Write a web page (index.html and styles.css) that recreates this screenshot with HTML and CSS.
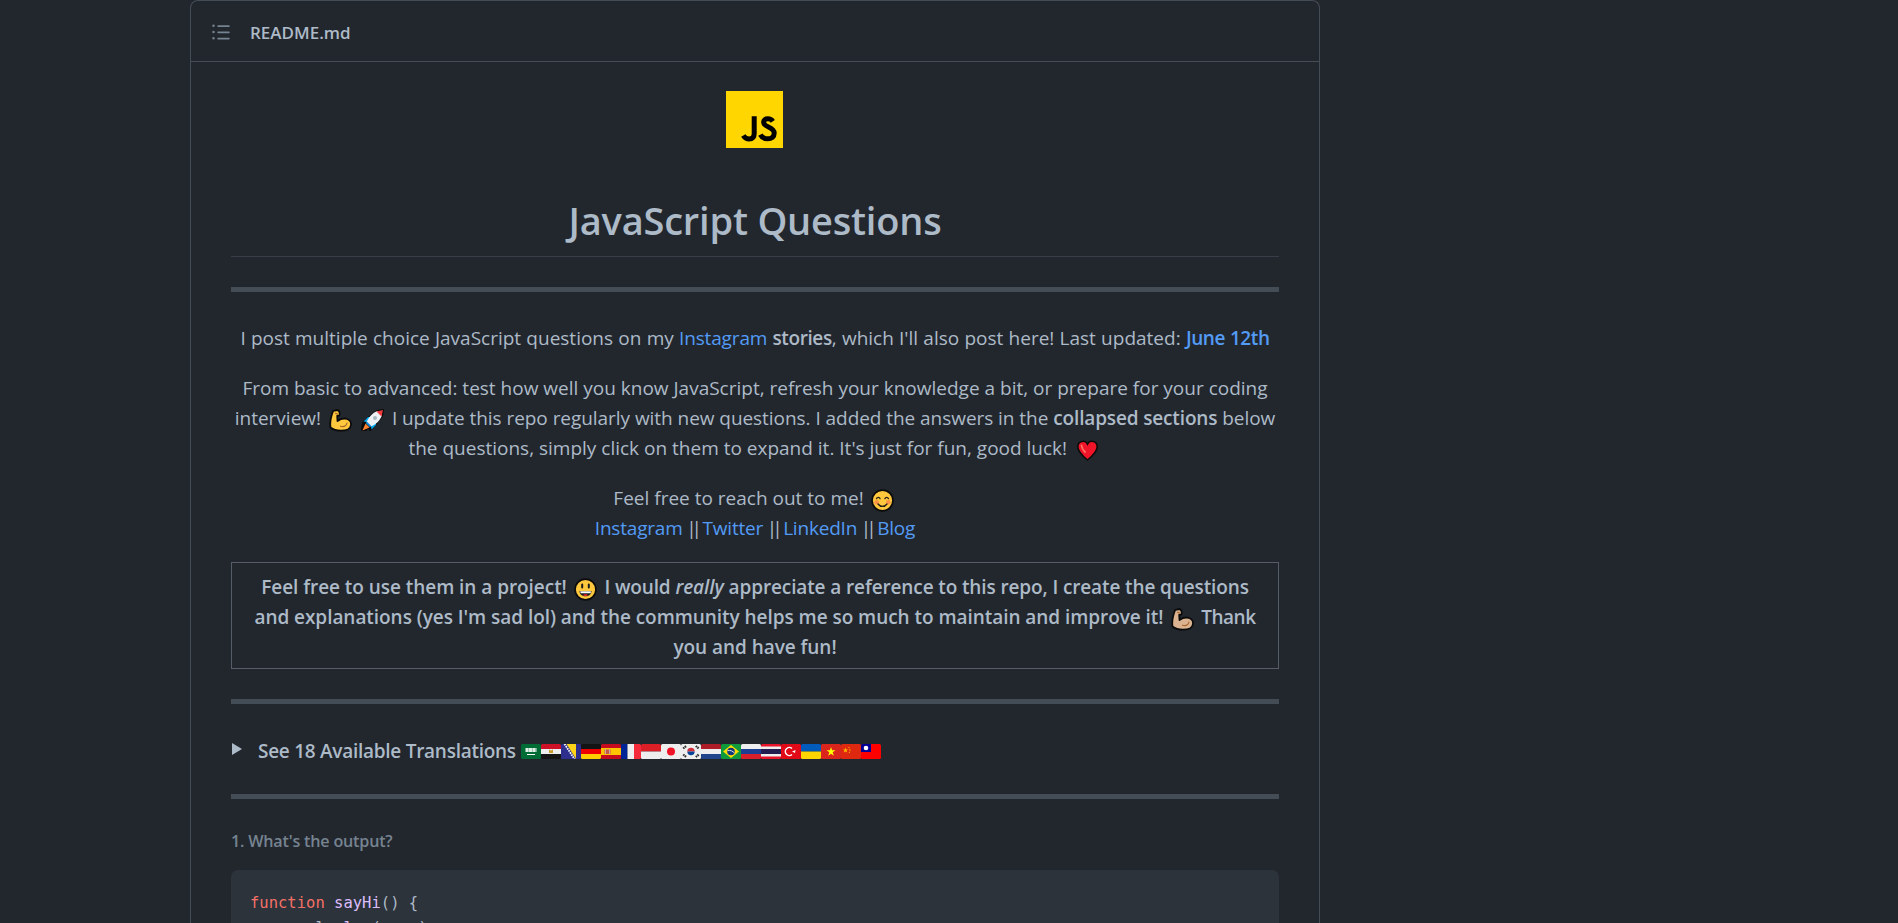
FILE: index.html
```html
<!DOCTYPE html>
<html lang="en">
<head>
<meta charset="utf-8">
<title>JavaScript Questions</title>
<link rel="stylesheet" href="styles.css">
</head>
<body>
<svg class="defs" width="0" height="0" aria-hidden="true">
  <defs>
    <symbol id="arm" viewBox="0 0 23 23">
      <path d="M4.2 1.800 8.800 1c1.300.9 2 1.900 1.900 3.400L10.300 6.600 8.200 6.900l.3 5.100c3-2.300 6.500-3 9.500-2 2.600.9 4.200 3.200 4 5.700-.3 3.800-4.600 6-10 6-4.500 0-8-1.100-10.500-3.200C.7 14 2 7.500 4.200 1.800z" fill="currentColor" stroke="#0b0b0b" stroke-width="1.800" stroke-linejoin="round"/>
      <path d="M11.500 17.200c3 .9 6 .1 6.500-3.200M6.500 4.300l2 .8" fill="none" stroke="#a5642c" stroke-width="1.200" stroke-linecap="round"/>
    </symbol>
    <clipPath id="flag-clip"><rect width="20" height="15" rx="1.500"/></clipPath>
  </defs>
</svg>
<main class="readme">
  <header class="bar">
    <svg class="toc" viewBox="0 0 16 16"><path d="M2 4a1 1 0 100-2 1 1 0 000 2zm3.750-1.500a.75.75 0 000 1.500h8.500a.75.75 0 000-1.500h-8.500zm0 5a.75.75 0 000 1.500h8.500a.75.75 0 000-1.500h-8.500zm0 5a.75.75 0 000 1.500h8.500a.75.75 0 000-1.500h-8.500zM3 8a1 1 0 11-2 0 1 1 0 012 0zm-1 6a1 1 0 100-2 1 1 0 000 2z"/></svg>
    <span class="file">README.md</span>
  </header>
  <article class="body">
    <div class="logo">
      <svg width="57" height="57" viewBox="0 0 57 57"><path fill="#ffd600" d="M0 0h57v57H0z"/><path d="M28.200 25.300v17.200c0 3.600-1.700 5.400-5 5.400-2.700 0-4.600-1.300-5.900-3.500M46.800 30.400c-1.200-1.800-2.600-2.600-4.900-2.600-2.600 0-4.300 1.300-4.300 3.500 0 5.600 10.600 4 10.600 10.900 0 3.500-2.500 5.600-6.500 5.600-3.400 0-5.900-1.400-7.300-4.200" fill="none" stroke="#000" stroke-width="5"/></svg>
    </div>
    <h1>JavaScript Questions</h1>
    <hr>
    <div class="para">
      <div class="line spaced"><span>I post multiple choice JavaScript questions on my</span> <a class="insta">Instagram</a> <b class="stories">stories</b><span>, which I'll also post here! Last updated:</span> <a class="date">June 12th</a></div>
    </div>
    <div class="para">
      <div class="line">From basic to advanced: test how well you know JavaScript, refresh your knowledge a bit, or prepare for your coding</div>
      <div class="line"><span>interview!</span> <svg class="emoji yellow" viewBox="0 0 23 23"><use href="#arm"/></svg> <svg class="emoji" viewBox="0 0 23 23"><path d="M2 14l5-5 9-7 6-1-1 6-7 9-5 5-1-4-3 4H1l.5-5 3-2z" fill="#0b0b0b" stroke="#0b0b0b" stroke-width="2" stroke-linejoin="round"/><path d="M2.500 12.500 7 8h3l-4 5zM10.500 20.500 15 16v-3l-5 4z" fill="#00a6ed"/><path d="M5.500 13.500c2-5.500 6-9.500 11-11.500l4.500 4.500c-2 5-6 9-11.500 11z" fill="#edf1f5"/><path d="M15.500 2.500 22 1l-1.500 6.500z" fill="#f03a3e"/><circle cx="14" cy="9" r="2" fill="#a9b7c0"/><path d="M4.500 14.500 8.500 18.500 1.500 21.500z" fill="#ff822d"/><path d="m5.500 13.500 4 4" stroke="#1188d8" stroke-width="1.800"/></svg> <span class="tight">I update this repo regularly with new questions. I added the answers in the</span> <b class="sections">collapsed sections</b> <span class="tight">below</span></div>
      <div class="line"><span>the questions, simply click on them to expand it. It's just for fun, good luck!</span> <svg class="emoji heart" viewBox="0 0 23 23"><path d="M11.500 21C6 16.500 1.800 12.500 1.800 7.700c0-5.800 7.400-7.300 9.700-2.500 2.300-4.800 9.700-3.300 9.700 2.500 0 4.800-4.200 8.800-9.700 13.300z" fill="#f01428" stroke="#0b0b0b" stroke-width="1.600"/><path d="M5.500 6.500c.3 2.500 1.500 4.500 3.500 6.500" fill="none" stroke="#ff7264" stroke-width="1.800" stroke-linecap="round"/></svg></div>
    </div>
    <div class="para">
      <div class="line"><span>Feel free to reach out to me!</span> <svg class="emoji" viewBox="0 0 23 23"><circle cx="11.500" cy="11.500" r="10.400" fill="#ffc83d" stroke="#0b0b0b" stroke-width="1.600"/><circle cx="5.700" cy="13.300" r="2.300" fill="#ff9246"/><circle cx="17.300" cy="13.300" r="2.300" fill="#ff9246"/><path d="M5.500 9.700c.6-1.900 3-1.900 3.600 0M13.900 9.700c.6-1.900 3-1.900 3.600 0M7 15c2.300 3.200 6.700 3.200 9 0" fill="none" stroke="#2b2118" stroke-width="1.300" stroke-linecap="round"/></svg></div>
      <div class="line links"><a>Instagram</a><span class="sep">||</span><a>Twitter</a><span class="sep">||</span><a>LinkedIn</a><span class="sep">||</span><a>Blog</a></div>
    </div>
    <div class="note">
      <div class="line"><span>Feel free to use them in a project!</span> <svg class="emoji" viewBox="0 0 23 23"><circle cx="11.500" cy="11.500" r="10.400" fill="#ffc83d" stroke="#0b0b0b" stroke-width="1.600"/><path d="M8.200 6.500v3M14.800 6.500v3" stroke="#1b1b1b" stroke-width="2" stroke-linecap="round"/><path d="M5.500 13h12c0 7-12 7-12 0z" fill="#1b1b1b"/><path d="M6.200 13.200h10.600v2H6.700z" fill="#fff"/><path d="M9 17.300c1-1.300 4-1.300 5 0-1.500 1-3.500 1-5 0z" fill="#f0282d"/></svg> <span class="would">I would</span> <em>really</em> <span class="want">appreciate a reference to this repo, I create the questions</span></div>
      <div class="line"><span>and explanations (yes I'm sad lol) and the community helps me so much to maintain and improve it!</span> <svg class="emoji tan" viewBox="0 0 23 23"><use href="#arm"/></svg> <span class="thank">Thank</span></div>
      <div class="line">you and have fun!</div>
    </div>
    <hr>
    <div class="summary">
      <svg class="marker" viewBox="0 0 10 12"><path d="M0 0v12l10-6z"/></svg>
      <b>See 18 Available Translations</b>
      <div class="flags">
        <svg viewBox="0 0 20 15"><g clip-path="url(#flag-clip)"><path fill="#006c35" d="M0 0h20v15H0z"/><path d="M4.500 6h11" stroke="#dfeee5" stroke-width="4" stroke-dasharray="3.200 .3"/><path d="M6 10.500h8" stroke="#fff"/></g></svg>
        <svg viewBox="0 0 20 15"><g clip-path="url(#flag-clip)"><path fill="#ce1126" d="M0 0h20v5H0z"/><path fill="#eee" d="M0 5h20v5H0z"/><path fill="#151515" d="M0 10h20v5H0z"/><path d="M8 5.500l2 1 2-1v3.500H8z" fill="#c99b28"/></g></svg>
        <svg viewBox="0 0 20 15"><g clip-path="url(#flag-clip)"><path fill="#2e2f8c" d="M0 0h20v15H0z"/><path fill="#ffd317" d="M5.500 0H15v15z"/><path d="M3.500 0 13.500 15" stroke="#fff" stroke-width="1.800" stroke-dasharray="1.600 .9"/></g></svg>
        <svg viewBox="0 0 20 15"><g clip-path="url(#flag-clip)"><path fill="#141414" d="M0 0h20v5H0z"/><path fill="#e00" d="M0 5h20v5H0z"/><path fill="#ffce00" d="M0 10h20v5H0z"/></g></svg>
        <svg viewBox="0 0 20 15"><g clip-path="url(#flag-clip)"><path fill="#c60b1e" d="M0 0h20v15H0z"/><path fill="#ffc400" d="M0 4h20v7H0z"/><path fill="#c4564a" d="M3.500 5.500h6V10h-6z"/><path d="M4.500 5v5M8.500 5v5" stroke="#c9a9a0"/></g></svg>
        <svg viewBox="0 0 20 15"><g clip-path="url(#flag-clip)"><path fill="#002495" d="M0 0h6.500v15H0z"/><path fill="#eee" d="M6.500 0h6.500v15H6.500z"/><path fill="#f52b3b" d="M13 0h7v15h-7z"/></g></svg>
        <svg viewBox="0 0 20 15"><g clip-path="url(#flag-clip)"><path fill="#dc1f26" d="M0 0h20v7.500H0z"/><path fill="#eee" d="M0 7.500h20V15H0z"/></g></svg>
        <svg viewBox="0 0 20 15"><g clip-path="url(#flag-clip)"><path fill="#eee" d="M0 0h20v15H0z"/><circle cx="10" cy="7.500" r="4" fill="#f01428"/></g></svg>
        <svg viewBox="0 0 20 15"><g clip-path="url(#flag-clip)"><path fill="#eee" d="M0 0h20v15H0z"/><path d="M6.300 7.500a3.700 3.700 0 0 1 7.400 0z" fill="#d22f3c"/><path d="M6.300 7.500a3.700 3.700 0 0 0 7.400 0z" fill="#0a4595"/><path d="M2.200 4.500l3-2.500M14.800 2l3 2.500M2.200 10.500l3 2.500M14.800 13l3-2.500" stroke="#333" stroke-width="2.200" stroke-dasharray="1.600 .5"/></g></svg>
        <svg viewBox="0 0 20 15"><g clip-path="url(#flag-clip)"><path fill="#ae1c28" d="M0 0h20v5H0z"/><path fill="#eee" d="M0 5h20v5H0z"/><path fill="#21468b" d="M0 10h20v5H0z"/></g></svg>
        <svg viewBox="0 0 20 15"><g clip-path="url(#flag-clip)"><path fill="#109a3c" d="M0 0h20v15H0z"/><path fill="#fedf00" d="M10 1l8 6.500-8 6.500-8-6.500z"/><circle cx="10" cy="7.500" r="3.800" fill="#14387c"/><path d="M6.500 6.700c3-.7 5 .3 7 2.300" fill="none" stroke="#dfe8e8"/></g></svg>
        <svg viewBox="0 0 20 15"><g clip-path="url(#flag-clip)"><path fill="#eee" d="M0 0h20v5H0z"/><path fill="#1c3f94" d="M0 5h20v5H0z"/><path fill="#d91f2c" d="M0 10h20v5H0z"/></g></svg>
        <svg viewBox="0 0 20 15"><g clip-path="url(#flag-clip)"><path fill="#e8142a" d="M0 0h20v15H0z"/><path fill="#eee" d="M0 2.500h20v10H0z"/><path fill="#241d4f" d="M0 5h20v5H0z"/></g></svg>
        <svg viewBox="0 0 20 15"><g clip-path="url(#flag-clip)"><path fill="#e30a17" d="M0 0h20v15H0z"/><path d="M11 4.500a4 4 0 1 0 0 6" fill="none" stroke="#fff" stroke-width="1.500"/><path d="M11 7.500l3.500-1.500-.5 3z" fill="#fff"/></g></svg>
        <svg viewBox="0 0 20 15"><g clip-path="url(#flag-clip)"><path fill="#005bbb" d="M0 0h20v7.500H0z"/><path fill="#ffd500" d="M0 7.500h20V15H0z"/></g></svg>
        <svg viewBox="0 0 20 15"><g clip-path="url(#flag-clip)"><path fill="#da251d" d="M0 0h20v15H0z"/><path d="M10 3l1.100 3.300h3.400l-2.800 2 1.100 3.400L10 9.700l-2.800 2 1.100-3.400-2.800-2h3.400z" fill="#ff0"/></g></svg>
        <svg viewBox="0 0 20 15"><g clip-path="url(#flag-clip)"><path fill="#de2910" d="M0 0h20v15H0z"/><path d="M4.500 3.500l.7 1.900h2L5.600 6.600l.6 2-1.700-1.200-1.700 1.200.6-2-1.600-1.200h2z" fill="#ffb400"/><path d="M7.500 3c2 1.500 2 5 0 6.500" fill="none" stroke="#ffb400" stroke-dasharray="1.500 1"/></g></svg>
        <svg viewBox="0 0 20 15"><g clip-path="url(#flag-clip)"><path fill="#fe0000" d="M0 0h20v15H0z"/><path fill="#000095" d="M0 0h10v8H0z"/><circle cx="5" cy="4" r="2.300" fill="#fff"/></g></svg>
      </div>
    </div>
    <hr>
    <h6>1. What's the output?</h6>
    <pre><span class="kw">function</span> <span class="fn">sayHi</span>() {
  console.<span class="fn">log</span>(name);</pre>
  </article>
</main>
</body>
</html>
```
FILE: styles.css
```css
* { box-sizing: border-box; }
html, body { margin: 0; height: 100%; overflow: hidden; }
body {
  background: #22272e;
  color: #adbac7;
  font: 19px/30px "Open Sans", "Noto Sans", sans-serif;
}
.defs { position: absolute; }
.readme {
  width: 1130px;
  height: 923px;
  margin-left: 190px;
  overflow: hidden;
  border: 1px solid #444c56;
  border-bottom: 0;
  border-radius: 8px 8px 0 0;
}
.bar {
  display: flex;
  align-items: center;
  height: 61px;
  padding: 1px 20px 0;
  border-bottom: 1px solid #444c56;
}
.toc { width: 20px; height: 20px; fill: #768390; }
.file { margin: 3px 0 0 19px; font-size: 17px; font-weight: 600; }
.body { padding: 29px 40px 0; }
.logo { display: flex; justify-content: center; height: 103px; padding-right: 1px; }
h1 {
  margin: 0 0 30px;
  height: 63px;
  padding-top: 1px;
  border-bottom: 1px solid #373e47;
  font-size: 38px;
  line-height: 50px;
  font-weight: 600;
  letter-spacing: -.2px;
  text-align: center;
}
hr { height: 5px; margin: 0 0 30px; border: 0; background: #444c56; }
b { font-weight: 600; letter-spacing: -.2px; }
a { color: #539bf5; }
.para { margin-bottom: 20px; }
.line { height: 30px; line-height: 32px; text-align: center; white-space: nowrap; }
.spaced { word-spacing: .3px; }
.insta { letter-spacing: -.15px; }
.stories { letter-spacing: -.4px; }
.date { font-weight: 600; letter-spacing: -.4px; }
.tight { letter-spacing: -.05px; }
.sections { letter-spacing: -.15px; }
.emoji { width: 23px; height: 23px; margin: 0 2.500px; vertical-align: -7px; }
.heart { margin-left: 4px; }
.yellow { color: #ffc83d; }
.tan { color: #dcb391; }
.links { display: flex; justify-content: center; letter-spacing: -.2px; }
.sep { width: 22px; margin-left: -2px; letter-spacing: -5px; }
.note {
  height: 107px;
  margin-bottom: 30px;
  padding-top: 8px;
  border: 1px solid #545d68;
  font-weight: 600;
  letter-spacing: -.05px;
}
.would { letter-spacing: -.15px; }
.want { letter-spacing: -.12px; }
.thank { letter-spacing: -.5px; }
.summary { display: flex; align-items: center; height: 30px; margin-bottom: 30px; padding-left: 1px; }
.summary b { margin: 3px 0 0 16px; letter-spacing: -.27px; }
.marker { width: 10px; height: 12px; fill: #adbac7; }
.flags { display: flex; margin: 5px 0 0 5.500px; }
.flags svg { width: 20px; height: 15px; }
h6 { margin: 0 0 20px; font-size: 16.150px; line-height: 25px; height: 21px; font-weight: 600; letter-spacing: -.2px; color: #768390; }
pre {
  margin: 0;
  height: 73px;
  padding: 21px 19px 0;
  border-radius: 7px 7px 0 0;
  background: #2d333b;
  font: 15.530px/24.650px "DejaVu Sans Mono", monospace;
}
.kw { color: #f47067; }
.fn { color: #dcbdfb; }
```
